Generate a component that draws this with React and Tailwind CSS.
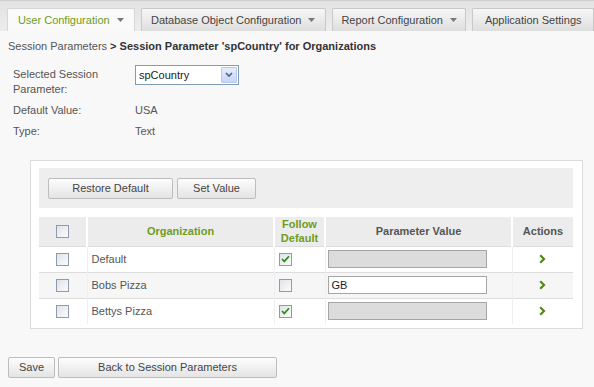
import React from "react";

const Caret = () => (
  <svg width="7" height="4" viewBox="0 0 7 4" className="ml-[7px] inline-block">
    <path d="M0 0h7L3.5 4z" fill="#777" />
  </svg>
);

const Tab = ({ label, active, caret, width }) => (
  <div
    className={
      "h-[23px] flex items-center justify-center border border-b-0 rounded-t-[2px] " +
      (active
        ? "bg-[#fafafa] border-[#d6d6d6] text-[#6f9c1e]"
        : "bg-gradient-to-b from-[#f7f7f7] to-[#dedede] border-[#c8c8c8] text-[#444]")
    }
    style={{ width }}
  >
    {label}
    {caret && <Caret />}
  </div>
);

const Box = ({ checked }) => (
  <div className="w-[13px] h-[13px] border border-[#8c9cae] bg-gradient-to-br from-[#dfe3e8] to-[#fbfbfb] flex items-center justify-center">
    {checked && (
      <svg width="9" height="8" viewBox="0 0 9 8">
        <path d="M1 4l2.3 2.4L8 1.2" stroke="#2f8a1f" strokeWidth="1.7" fill="none" />
      </svg>
    )}
  </div>
);

const Btn = ({ children, className }) => (
  <button
    className={
      "h-[21px] border border-[#bdbdbd] rounded-[2px] bg-gradient-to-b from-[#fdfdfd] to-[#e4e4e4] text-[#444] text-[11px] " +
      className
    }
  >
    {children}
  </button>
);

const Arrow = () => (
  <svg width="7" height="10" viewBox="0 0 7 10" className="mx-auto">
    <path d="M1.2 1.2L5 5L1.2 8.8" stroke="#4e8a12" strokeWidth="2.2" fill="none" />
  </svg>
);

const rows = [
  { name: "Default", follow: true, value: "" },
  { name: "Bobs Pizza", follow: false, value: "GB" },
  { name: "Bettys Pizza", follow: true, value: "" },
];

export default function App() {
  return (
    <div className="w-[594px] h-[387px] overflow-hidden bg-[#f8f8f8] text-[11px] text-[#444] font-['Liberation_Sans',Arial,sans-serif]">
      {/* Tabs */}
      <div className="h-[31px] bg-gradient-to-b from-[#e2e2e2] to-[#ededed] border-t border-[#cfcfcf] flex items-end gap-[6px] pl-[7px]">
        <Tab label="User Configuration" active caret width={128} />
        <Tab label="Database Object Configuration" caret width={186} />
        <Tab label="Report Configuration" caret width={135} />
        <Tab label="Application Settings" width={122} />
      </div>

      {/* Breadcrumb */}
      <div className="pl-[8px] pt-[8px] leading-[14px]">
        <span className="text-[#555]">Session Parameters</span>
        <span className="font-bold text-[#333]"> &gt; Session Parameter 'spCountry' for Organizations</span>
      </div>

      {/* Form */}
      <div className="pl-[13px] pt-[12px]">
        <div className="flex">
          <div className="w-[122px] leading-[15px] text-[#555] pt-[2px]">
            Selected Session
            <br />
            Parameter:
          </div>
          <div className="w-[104px] h-[20px] border border-[#7f9db9] bg-white flex items-center justify-between pl-[3px] pr-[1px] text-[#222]">
            <span>spCountry</span>
            <div className="w-[16px] h-[16px] bg-gradient-to-b from-[#e6eefc] to-[#c5d5f5] border border-[#b8c9ea] rounded-[1px] flex items-center justify-center">
              <svg width="8" height="6" viewBox="0 0 8 6">
                <path d="M1 1l3 3 3-3" stroke="#4d6185" strokeWidth="1.6" fill="none" />
              </svg>
            </div>
          </div>
        </div>
        <div className="flex leading-[15px] mt-[6px] text-[#555]">
          <div className="w-[122px]">Default Value:</div>
          <div>USA</div>
        </div>
        <div className="flex leading-[15px] mt-[6px] text-[#555]">
          <div className="w-[122px]">Type:</div>
          <div>Text</div>
        </div>
      </div>

      {/* Panel */}
      <div className="ml-[30px] mt-[21px] w-[553px] bg-white border border-[#dcdcdc] pt-[7px] pb-[4px] pl-[8px] pr-[9px]">
        <div className="h-[40px] bg-[#eeeeee] flex items-center gap-[4px] pl-[9px]">
          <Btn className="w-[125px]">Restore Default</Btn>
          <Btn className="w-[79px]">Set Value</Btn>
        </div>
        <table className="mt-[9px] w-[534px] border-collapse table-fixed">
          <thead>
            <tr className="h-[29px] bg-[#ececec] font-bold leading-[14px]">
              <th className="w-[48px] border-r-2 border-white">
                <div className="flex justify-center">
                  <Box />
                </div>
              </th>
              <th className="w-[187px] border-r-2 border-white text-[#6f9c1e]">Organization</th>
              <th className="w-[51px] border-r-2 border-white text-[#6f9c1e]">
                Follow
                <br />
                Default
              </th>
              <th className="w-[187px] border-r-2 border-white text-[#555]">Parameter Value</th>
              <th className="w-[61px] text-[#555]">Actions</th>
            </tr>
          </thead>
          <tbody>
            {rows.map((r, i) => (
              <tr
                key={r.name}
                className={
                  "h-[26px] border-t border-[#dddddd] " + (i === 1 ? "bg-[#f6f6f6]" : "bg-white")
                }
              >
                <td className="border-r border-[#efefef]">
                  <div className="flex justify-center">
                    <Box />
                  </div>
                </td>
                <td className="border-r border-[#efefef] pl-[4px] text-[#555]">{r.name}</td>
                <td className="border-r border-[#efefef] pl-[4px]">
                  <Box checked={r.follow} />
                </td>
                <td className="border-r border-[#efefef] pl-[2px]">
                  <div
                    className={
                      "w-[159px] h-[18px] border border-[#a5a5a5] pl-[3px] flex items-center text-[#222] " +
                      (r.value ? "bg-white" : "bg-[#dcdcdc]")
                    }
                  >
                    {r.value}
                  </div>
                </td>
                <td>
                  <div className="flex justify-center">
                    <Arrow />
                  </div>
                </td>
              </tr>
            ))}
          </tbody>
        </table>
      </div>

      {/* Bottom buttons */}
      <div className="flex gap-[3px] pl-[8px] mt-[28px]">
        <Btn className="w-[47px]">Save</Btn>
        <Btn className="w-[219px]">Back to Session Parameters</Btn>
      </div>
    </div>
  );
}
